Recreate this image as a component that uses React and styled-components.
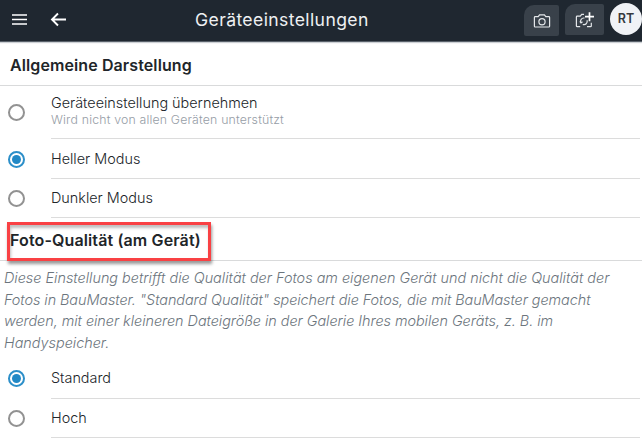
import React from "react";
import styled, { createGlobalStyle } from "styled-components";

const GlobalStyle = createGlobalStyle`
  * {
    box-sizing: border-box;
  }

  body {
    margin: 0;
    background-color: #fff;
    font-family: "Inter", sans-serif;
    color: #212529;
    overflow: hidden;
  }
`;

const Page = styled.div`
  width: 642px;
  height: 444px;
  overflow: hidden;
`;

const Header = styled.header`
  display: grid;
  grid-template-columns: 195px 1fr auto;
  height: 42px;
  background-color: #1f2730;
  border-bottom: 1px solid #59616a;
  box-shadow: 0 1px 1px #ccd0d4;
  color: #fff;
`;

const HeaderLeft = styled.div`
  display: flex;
  padding: 11px 0 0 11px;
  gap: 22px;
`;

const Title = styled.h1`
  margin: 0;
  padding-top: 9px;
  font-size: 17.6px;
  font-weight: 400;
  line-height: 22px;
  letter-spacing: 0.38px;
  white-space: nowrap;
  color: #eef0f2;
`;

const HeaderRight = styled.div`
  display: flex;
  align-items: flex-start;
`;

const PhotoButton = styled.button`
  display: flex;
  align-items: center;
  justify-content: center;
  width: ${(props) => props.width};
  height: 31px;
  margin: ${(props) => props.margin};
  padding: 0;
  border: 0;
  border-radius: 10px 2px 2px 2px;
  background-color: #39414a;
  color: #e4e7ea;
`;

const Avatar = styled.div`
  width: 32px;
  height: 32px;
  margin: 3px 0 0 6px;
  border-radius: 50%;
  background-color: #f0f2f6;
  color: #35393e;
  font-size: 12.5px;
  font-weight: 600;
  line-height: 32px;
  text-align: center;
`;

const SectionTitle = styled.h2`
  display: flex;
  align-items: center;
  height: ${(props) => props.height};
  margin: 0;
  padding: 2px 0 0 10px;
  border-bottom: 1px solid #d9dadb;
  font-size: 16px;
  font-weight: 600;
  letter-spacing: ${(props) => props.spacing};
  white-space: nowrap;
`;

const Marked = styled.span`
  position: relative;
`;

const Marker = styled.span`
  position: absolute;
  left: -3px;
  top: -8px;
  width: 204px;
  height: 39px;
  border: 3px solid #f94144;
  box-shadow: 1px 3px 3px rgba(0, 0, 0, 0.4), inset 1px 3px 3px rgba(0, 0, 0, 0.25);
`;

const Option = styled.label`
  display: flex;
  align-items: center;
  height: ${(props) => props.height};
  padding: 0 2px 0 8px;
`;

const Radio = styled.span`
  display: flex;
  align-items: center;
  justify-content: center;
  width: 17px;
  height: 17px;
  margin-right: 26px;
  border: 2px solid ${(props) => (props.checked ? "#2c8fc9" : "#929292")};
  border-radius: 50%;

  &::after {
    content: "";
    width: 9px;
    height: 9px;
    border-radius: 50%;
    background-color: ${(props) => (props.checked ? "#2289c6" : "transparent")};
  }
`;

const OptionBody = styled.span`
  display: flex;
  flex: 1;
  flex-direction: column;
  justify-content: center;
  height: 100%;
  border-bottom: 1px solid #dcdcdc;
`;

const OptionText = styled.span`
  font-size: 14.4px;
  font-weight: 350;
  line-height: 18px;
  letter-spacing: ${(props) => props.spacing};
`;

const OptionNote = styled.span`
  padding-bottom: 2px;
  font-size: 12.3px;
  font-weight: 350;
  line-height: 16px;
  letter-spacing: 0.18px;
  color: #969da6;
`;

const Description = styled.p`
  height: 97px;
  margin: 0;
  padding: 6px 0 0 4px;
  font-size: 14.4px;
  font-weight: 350;
  font-style: italic;
  line-height: 21.5px;
  color: #6c757d;
`;

const Line = styled.span`
  display: block;
  white-space: nowrap;
  letter-spacing: ${(props) => props.spacing};
`;

const MenuIcon = () => (
  <svg width="17" height="17" viewBox="0 0 17 17" fill="none" stroke="#fff" strokeWidth="1.5">
    <path d="M1 4h15M1 8.5h15M1 13h15" />
  </svg>
);

const BackIcon = () => (
  <svg width="17" height="17" viewBox="0 0 17 17" fill="none" stroke="#fff" strokeWidth="1.9">
    <path d="M8 2.5 2 8.5l6 6M2 8.5h14" />
  </svg>
);

const CameraIcon = () => (
  <svg width="18" height="16" viewBox="0 0 18 16" fill="none" stroke="currentColor" strokeWidth="1.2">
    <path d="M2.2 3.7h3L6.6 1.9h4.8l1.4 1.8h3q.8 0 .8.8v8.7q0 .8-.8.8H2.2q-.8 0-.8-.8V4.5q0-.8.8-.8Z" />
    <circle cx="9" cy="8.7" r="3.1" />
  </svg>
);

const CameraPlusIcon = () => (
  <svg width="20" height="18" viewBox="0 0 20 18" fill="none" stroke="currentColor" strokeWidth="1.2">
    <path d="M9 3.4H6.7L5.3 5.2H2.2q-.8 0-.8.8v8.9q0 .8.8.8h3M12 15.7h3.5q.8 0 .8-.8v-3.2" />
    <path d="M9.4 7.1a3.2 3.2 0 0 0-3.5 4.6M12 9.3a3.2 3.2 0 0 1-4.2 4.1M4.8 10.4l1.2 1.5 1.5-1.2" />
    <path d="M14.5 1.2v9M10 5.7h9" stroke="#fff" strokeWidth="1.7" />
  </svg>
);

const RadioOption = ({ text, note, checked, height, spacing }) => (
  <Option height={height}>
    <Radio checked={checked} />
    <OptionBody>
      <OptionText spacing={spacing}>{text}</OptionText>
      {note && <OptionNote>{note}</OptionNote>}
    </OptionBody>
  </Option>
);

const App = () => {
  return (
    <Page>
      <GlobalStyle />
      <Header>
        <HeaderLeft>
          <MenuIcon />
          <BackIcon />
        </HeaderLeft>
        <Title>Geräteeinstellungen</Title>
        <HeaderRight>
          <PhotoButton width="35px" margin="5px 0 0">
            <CameraIcon />
          </PhotoButton>
          <PhotoButton width="39px" margin="4px 0 0 6px">
            <CameraPlusIcon />
          </PhotoButton>
          <Avatar>RT</Avatar>
        </HeaderRight>
      </Header>
      <SectionTitle height="44px" spacing="0.1px">Allgemeine Darstellung</SectionTitle>
      <RadioOption
        height="53px"
        text="Geräteeinstellung übernehmen"
        note="Wird nicht von allen Geräten unterstützt"
        spacing="0"
      />
      <RadioOption height="40px" text="Heller Modus" spacing="0" checked />
      <RadioOption height="39px" text="Dunkler Modus" spacing="0" />
      <SectionTitle height="43px" spacing="0.13px">
        <Marked>
          Foto-Qualität (am Gerät)
          <Marker />
        </Marked>
      </SectionTitle>
      <Description>
        <Line spacing="0">Diese Einstellung betrifft die Qualität der Fotos am eigenen Gerät und nicht die Qualität der</Line>
        <Line spacing="-0.05px">Fotos in BauMaster. "Standard Qualität" speichert die Fotos, die mit BauMaster gemacht</Line>
        <Line spacing="-0.03px">werden, mit einer kleineren Dateigröße in der Galerie Ihres mobilen Geräts, z. B. im</Line>
        <Line spacing="0">Handyspeicher.</Line>
      </Description>
      <RadioOption height="41px" text="Standard" spacing="0" checked />
      <RadioOption height="39px" text="Hoch" spacing="0" />
    </Page>
  );
};

export default App;
